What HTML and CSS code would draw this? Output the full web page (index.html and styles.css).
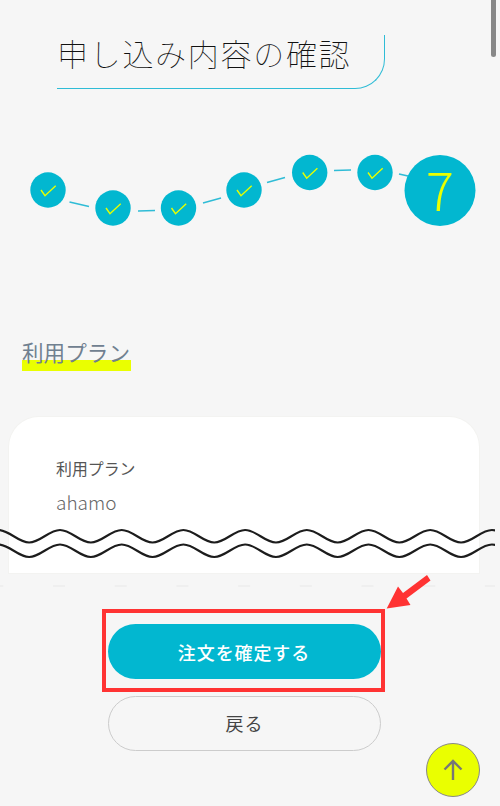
FILE: index.html
```html
<!DOCTYPE html>
<html lang="ja">
<head>
<meta charset="utf-8">
<title>申し込み内容の確認</title>
<link rel="stylesheet" href="styles.css">
</head>
<body>
<main class="page">
  <h1 class="title">申し込み内容の確認</h1>

  <svg class="progress" viewBox="0 150 500 80" width="500" height="80" aria-label="ステップ7">
    <g class="links">
      <path d="M69.5 202 89 206.5"/>
      <path d="M138 211 155 210.5"/>
      <path d="M203 203 221 198"/>
      <path d="M267 182.5 285 177.5"/>
      <path d="M334 170.5 351 170"/>
      <path d="M399 174 408 176"/>
    </g>
    <g class="nodes">
      <circle cx="48" cy="190" r="17.7"/>
      <circle cx="113" cy="208" r="17.7"/>
      <circle cx="178.5" cy="208" r="17.7"/>
      <circle cx="244" cy="190" r="17.7"/>
      <circle cx="309.7" cy="172.5" r="17.7"/>
      <circle cx="375" cy="172.5" r="17.7"/>
      <circle cx="440" cy="190.5" r="35.5"/>
    </g>
    <g class="checks">
      <path d="M41 190 45 195.7 55.7 185.7"/>
      <path d="M106 208 110 213.7 120.7 203.7"/>
      <path d="M171.5 208 175.5 213.7 186.2 203.7"/>
      <path d="M237 190 241 195.7 251.7 185.7"/>
      <path d="M302.7 172.5 306.7 178.2 317.4 168.2"/>
      <path d="M368 172.5 372 178.2 382.7 168.2"/>
    </g>
    <text class="current" x="440" y="210.5" text-anchor="middle">7</text>
  </svg>

  <h2 class="section-title"><span>利用プラン</span></h2>

  <section class="card">
    <p class="card-label">利用プラン</p>
    <p class="card-value">ahamo</p>
  </section>

  <div class="actions">
    <div class="primary-frame">
      <button class="btn btn-primary" type="button">注文を確定する</button>
    </div>
    <button class="btn btn-back" type="button">戻る</button>
  </div>
</main>

<svg class="tear" viewBox="0 525 495 65" width="495" height="65" aria-hidden="true">
  <path d="M-1.7 530c11 0 19.85 12.5 30.85 12.5s19.85-12.5 30.85-12.5s19.85 12.5 30.85 12.5s19.85-12.5 30.85-12.5s19.85 12.5 30.85 12.5s19.85-12.5 30.85-12.5s19.85 12.5 30.85 12.5s19.85-12.5 30.85-12.5s19.85 12.5 30.85 12.5s19.85-12.5 30.85-12.5s19.85 12.5 30.85 12.5s19.85-12.5 30.85-12.5s19.85 12.5 30.85 12.5s19.85-12.5 30.85-12.5s19.85 12.5 30.85 12.5s19.85-12.5 30.85-12.5s19.85 12.5 30.85 12.5"/>
  <path d="M-1.7 544.5c11 0 19.85 12.5 30.85 12.5s19.85-12.5 30.85-12.5s19.85 12.5 30.85 12.5s19.85-12.5 30.85-12.5s19.85 12.5 30.85 12.5s19.85-12.5 30.85-12.5s19.85 12.5 30.85 12.5s19.85-12.5 30.85-12.5s19.85 12.5 30.85 12.5s19.85-12.5 30.85-12.5s19.85 12.5 30.85 12.5s19.85-12.5 30.85-12.5s19.85 12.5 30.85 12.5s19.85-12.5 30.85-12.5s19.85 12.5 30.85 12.5s19.85-12.5 30.85-12.5s19.85 12.5 30.85 12.5"/>
  <line class="tear-trace" x1="0" y1="586" x2="495" y2="586"/>
</svg>

<svg class="callout" viewBox="380 570 55 45" width="55" height="45" aria-hidden="true">
  <polygon points="386.7,608.5 398,586.5 403,593 427,575 430.5,580.5 406.5,598.5 410.5,605"/>
</svg>

<button class="to-top" type="button" aria-label="ページ上部へ">
  <svg viewBox="0 0 24 24" width="24" height="24"><path d="M12 22V3M3.5 11.5 12 3l8.5 8.5"/></svg>
</button>

<div class="scrollbar"></div>
</body>
</html>
```
FILE: styles.css
```css
* { box-sizing: border-box; }
html, body { margin: 0; padding: 0; }
body {
  width: 500px;
  height: 806px;
  overflow: hidden;
  position: relative;
  background: #f6f6f6;
  color: #333;
  font-family: "Noto Sans CJK JP", "Noto Sans", sans-serif;
}
.page { display: flow-root; }

.title {
  width: 328px;
  height: 54px;
  margin: 35px 0 0 57px;
  padding: 0;
  border-right: 1.5px solid #2fbcd6;
  border-bottom: 1.5px solid #2fbcd6;
  border-bottom-right-radius: 30px;
  font-size: 31px;
  font-weight: 100;
  letter-spacing: 1.7px;
  line-height: 36px;
  white-space: nowrap;
  color: #111;
}

.progress { display: block; margin-top: 61px; overflow: visible; }
.links path { fill: none; stroke: #2fbcd6; stroke-width: 1.5; }
.nodes circle { fill: #02b7d0; }
.checks path { fill: none; stroke: #e6ff00; stroke-width: 1.4; }
.current {
  fill: #eaff00;
  font-family: "Noto Sans CJK JP", sans-serif;
  font-size: 52px;
  font-weight: 300;
}

.section-title {
  margin: 106px 0 0 22px;
  font-size: 21.6px;
  font-weight: 400;
  line-height: 32px;
  color: #708090;
}
.section-title span {
  display: inline-block;
  padding: 0 1px 3px 0;
  background: linear-gradient(#eaff00, #eaff00) left 24px / 100% 11px no-repeat;
}

.card {
  width: 470px;
  height: 156px;
  margin: 46px 0 0 9px;
  padding: 42px 47px 0;
  background: #fff;
  box-shadow: 0 0 0 1px #f3f3f1;
  border-radius: 30px 30px 0 0;
}
.card p { margin: 0; }
.card-label { font-size: 15.9px; line-height: 20px; color: #555; }
.card-value { margin-top: 9px !important; font-size: 19px; font-weight: 300; line-height: 28px; color: #666; }

.actions {
  margin: 36px 0 0 102px;
  width: 283px;
}
.primary-frame {
  height: 83px;
  border: 4.5px solid #ff3333;
  padding: 11px 0 0 1.5px;
}
.btn {
  display: block;
  width: 273px;
  height: 55px;
  border-radius: 28px;
  font-family: inherit;
  font-size: 18px;
  letter-spacing: 0.9px;
  padding: 0;
}
.btn-primary {
  background: #02b7d0;
  border: 0;
  color: #fff;
  font-weight: 500;
}
.btn-back {
  margin: 3.5px 0 0 6px;
  background: transparent;
  border: 1px solid #ccc;
  color: #444;
}

.tear {
  position: absolute;
  left: 0;
  top: 525px;
}
.tear path { fill: none; stroke: #1c1c1c; stroke-width: 2.1; }
.tear-trace { stroke: #e8e8e8; stroke-width: 1; stroke-dasharray: 12 49.7; stroke-dashoffset: 8.7; }

.callout { position: absolute; left: 380px; top: 570px; }
.callout polygon { fill: #ff3333; }

.to-top {
  position: absolute;
  left: 426px;
  top: 743px;
  width: 54px;
  height: 54px;
  padding: 0;
  display: flex;
  align-items: center;
  justify-content: center;
  border: 1px solid #888;
  border-radius: 50%;
  background: #eaff00;
}
.to-top path { fill: none; stroke: #777; stroke-width: 2.4; }

.scrollbar {
  position: absolute;
  left: 491px;
  top: 0;
  width: 5px;
  height: 57px;
  border-radius: 0 0 3px 3px;
  background: #888;
}
```
